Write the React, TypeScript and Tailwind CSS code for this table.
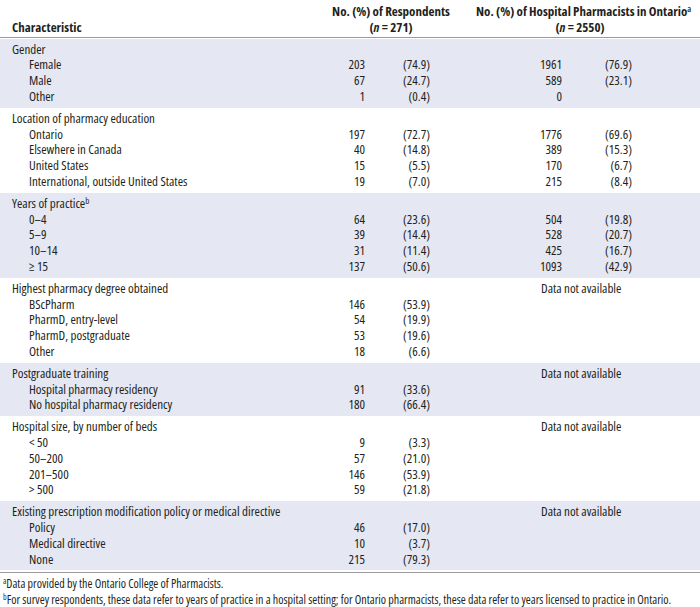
type Row = { label: string; n1?: string; p1?: string; n2?: string; p2?: string };
type Section = { title: React.ReactNode; shaded: boolean; na?: boolean; rows: Row[] };

const sections: Section[] = [
  {
    title: "Gender",
    shaded: true,
    rows: [
      { label: "Female", n1: "203", p1: "(74.9)", n2: "1961", p2: "(76.9)" },
      { label: "Male", n1: "67", p1: "(24.7)", n2: "589", p2: "(23.1)" },
      { label: "Other", n1: "1", p1: "(0.4)", n2: "0" },
    ],
  },
  {
    title: "Location of pharmacy education",
    shaded: false,
    rows: [
      { label: "Ontario", n1: "197", p1: "(72.7)", n2: "1776", p2: "(69.6)" },
      { label: "Elsewhere in Canada", n1: "40", p1: "(14.8)", n2: "389", p2: "(15.3)" },
      { label: "United States", n1: "15", p1: "(5.5)", n2: "170", p2: "(6.7)" },
      { label: "International, outside United States", n1: "19", p1: "(7.0)", n2: "215", p2: "(8.4)" },
    ],
  },
  {
    title: (
      <>
        Years of practice<sup className="text-[9px] relative -top-[4px]">b</sup>
      </>
    ),
    shaded: true,
    rows: [
      { label: "0–4", n1: "64", p1: "(23.6)", n2: "504", p2: "(19.8)" },
      { label: "5–9", n1: "39", p1: "(14.4)", n2: "528", p2: "(20.7)" },
      { label: "10–14", n1: "31", p1: "(11.4)", n2: "425", p2: "(16.7)" },
      { label: "≥ 15", n1: "137", p1: "(50.6)", n2: "1093", p2: "(42.9)" },
    ],
  },
  {
    title: "Highest pharmacy degree obtained",
    shaded: false,
    na: true,
    rows: [
      { label: "BScPharm", n1: "146", p1: "(53.9)" },
      { label: "PharmD, entry-level", n1: "54", p1: "(19.9)" },
      { label: "PharmD, postgraduate", n1: "53", p1: "(19.6)" },
      { label: "Other", n1: "18", p1: "(6.6)" },
    ],
  },
  {
    title: "Postgraduate training",
    shaded: true,
    na: true,
    rows: [
      { label: "Hospital pharmacy residency", n1: "91", p1: "(33.6)" },
      { label: "No hospital pharmacy residency", n1: "180", p1: "(66.4)" },
    ],
  },
  {
    title: "Hospital size, by number of beds",
    shaded: false,
    na: true,
    rows: [
      { label: "< 50", n1: "9", p1: "(3.3)" },
      { label: "50–200", n1: "57", p1: "(21.0)" },
      { label: "201–500", n1: "146", p1: "(53.9)" },
      { label: "> 500", n1: "59", p1: "(21.8)" },
    ],
  },
  {
    title: "Existing prescription modification policy or medical directive",
    shaded: true,
    na: true,
    rows: [
      { label: "Policy", n1: "46", p1: "(17.0)" },
      { label: "Medical directive", n1: "10", p1: "(3.7)" },
      { label: "None", n1: "215", p1: "(79.3)" },
    ],
  },
];

const font = { fontFamily: '"Open Sans", "DejaVu Sans", sans-serif', fontStretch: "75%" } as const;

export default function App() {
  return (
    <div className="w-[700px] bg-white text-[#231f20] text-[13px] leading-[15.8px]" style={font}>
      {/* header */}
      <div className="flex items-end pt-[4px] pb-[1px] border-b border-[#9a9a9a] font-bold">
        <div className="w-[325px] pl-[12px]">Characteristic</div>
        <div className="w-[132px] text-center">
          <div>No. (%) of Respondents</div>
          <div>
            (<i>n</i> = 271)
          </div>
        </div>
        <div className="w-[19px]" />
        <div className="w-[208px] text-center">
          <div className="whitespace-nowrap">
            No. (%) of Hospital Pharmacists in Ontario
            <sup className="text-[9px] font-semibold relative -top-[4px]">a</sup>
          </div>
          <div>
            (<i>n</i> = 2550)
          </div>
        </div>
      </div>
      <div className="h-[1px]" />
      {sections.map((s, i) => (
        <div key={i} className={`py-[3px] ${s.shaded ? "bg-[#e5e7f2]" : "bg-white"}`}>
          <div className="flex">
            <div className="w-[541px] pl-[12px] whitespace-nowrap">{s.title}</div>
            {s.na && <div className="whitespace-nowrap">Data not available</div>}
          </div>
          {s.rows.map((r, j) => (
            <div key={j} className="flex">
              <div className="w-[325px] pl-[29px] whitespace-nowrap">{r.label}</div>
              <div className="w-[40px] text-right">{r.n1}</div>
              <div className="w-[65px] text-right">{r.p1}</div>
              <div className="w-[132px] text-right">{r.n2}</div>
              <div className="w-[70px] text-right">{r.p2}</div>
            </div>
          ))}
        </div>
      ))}
      <div className="mt-[2px] border-t border-[#9a9a9a] pt-[3px] pl-[3px] text-[12px] leading-[16px]">
        <div className="whitespace-nowrap">
          <sup className="text-[8px] relative -top-[4px]">a</sup>Data provided by the Ontario College of Pharmacists.
        </div>
        <div className="whitespace-nowrap">
          <sup className="text-[8px] relative -top-[4px]">b</sup>For survey respondents, these data refer to years of practice in a hospital setting; for Ontario pharmacists, these data refer to years licensed to practice in Ontario.
        </div>
      </div>
    </div>
  );
}
